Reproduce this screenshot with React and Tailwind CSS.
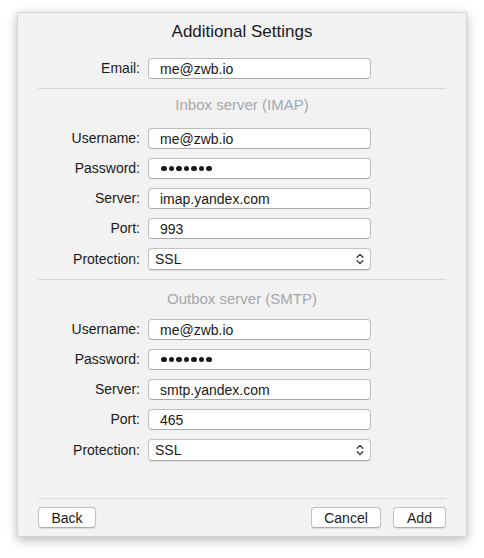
import React from 'react';

const font = { fontFamily: '"Liberation Sans", Arial, sans-serif' };

function TextBox({ value }) {
    return (
        <div className="h-[21px] w-[223px] rounded-[4px] border border-[#bdbdbd] border-b-[#a9a9a9] bg-white pl-[11px] flex items-center text-[14px] text-[#1a1a1a] leading-none">
            {value}
        </div>
    );
}

function PasswordBox() {
    return (
        <div className="h-[21px] w-[223px] rounded-[4px] border border-[#bdbdbd] border-b-[#a9a9a9] bg-white pl-[12px] flex items-center gap-[2px]">
            {Array.from({ length: 7 }).map((_, i) => (
                <span key={i} className="block w-[5.5px] h-[5.5px] rounded-full bg-[#1a1a1a]" />
            ))}
        </div>
    );
}

function SelectBox({ value }) {
    return (
        <div className="h-[22px] w-[223px] rounded-[4px] border border-[#c4c4c4] border-b-[#a9a9a9] bg-white pl-[6px] pr-[6px] flex items-center justify-between text-[14px] text-[#1a1a1a] leading-none shadow-[0_0.5px_1px_rgba(0,0,0,0.08)]">
            <span>{value}</span>
            <svg width="8" height="12" viewBox="0 0 8 12" fill="none" stroke="#333" strokeWidth="1.3" strokeLinecap="round" strokeLinejoin="round">
                <path d="M1.2 4.2 L4 1.4 L6.8 4.2" />
                <path d="M1.2 7.8 L4 10.6 L6.8 7.8" />
            </svg>
        </div>
    );
}

function Row({ label, children }) {
    return (
        <div className="flex items-center">
            <div className="w-[130px] pr-[8px] text-right text-[14px] text-[#1a1a1a]">{label}</div>
            {children}
        </div>
    );
}

// gapClass: space between the section title and the first field
function Section({ title, server, port, gapClass }) {
    return (
        <div className="flex flex-col">
            <div className="text-center text-[15px] text-[#a4a7ae] leading-none h-[15px]">{title}</div>
            <div className={`flex flex-col gap-[9px] ${gapClass}`}>
                <Row label="Username:"><TextBox value="me@zwb.io" /></Row>
                <Row label="Password:"><PasswordBox /></Row>
                <Row label="Server:"><TextBox value={server} /></Row>
                <Row label="Port:"><TextBox value={port} /></Row>
                <Row label="Protection:"><SelectBox value="SSL" /></Row>
            </div>
        </div>
    );
}

function Button({ children, className = '' }) {
    return (
        <button className={`h-[21px] rounded-[4px] border border-[#c2c2c2] border-b-[#adadad] bg-white text-[14px] text-[#1a1a1a] leading-none shadow-[0_0.5px_1px_rgba(0,0,0,0.1)] ${className}`}>
            {children}
        </button>
    );
}

export default function App() {
    return (
        <div className="w-[484px] h-[558px] bg-white pt-[12px] pl-[17px]" style={font}>
            <div className="w-[450px] h-[525px] bg-[#f2f2f2] border border-[#d4d4d4] shadow-[0_3px_10px_rgba(0,0,0,0.28)] flex flex-col">
                <div className="text-center text-[17px] text-[#1a1a1a] leading-none pt-[10px] h-[45px]">Additional Settings</div>

                <Row label="Email:"><TextBox value="me@zwb.io" /></Row>

                <div className="mx-[20px] mt-[9px] border-t border-[#d8d8d8]" />
                <div className="pt-[8px]">
                    <Section title="Inbox server (IMAP)" server="imap.yandex.com" port="993" gapClass="mt-[16px]" />
                </div>

                <div className="mx-[20px] mt-[9px] border-t border-[#d8d8d8]" />
                <div className="pt-[11px]">
                    <Section title="Outbox server (SMTP)" server="smtp.yandex.com" port="465" gapClass="mt-[13px]" />
                </div>

                <div className="flex-1" />
                <div className="mx-[20px] border-t border-[#d8d8d8]" />
                <div className="flex items-center px-[20px] pt-[8px] pb-[8px]">
                    <Button className="w-[58px]">Back</Button>
                    <div className="flex-1" />
                    <Button className="w-[70px]">Cancel</Button>
                    <Button className="w-[53px] ml-[12px]">Add</Button>
                </div>
            </div>
        </div>
    );
}
